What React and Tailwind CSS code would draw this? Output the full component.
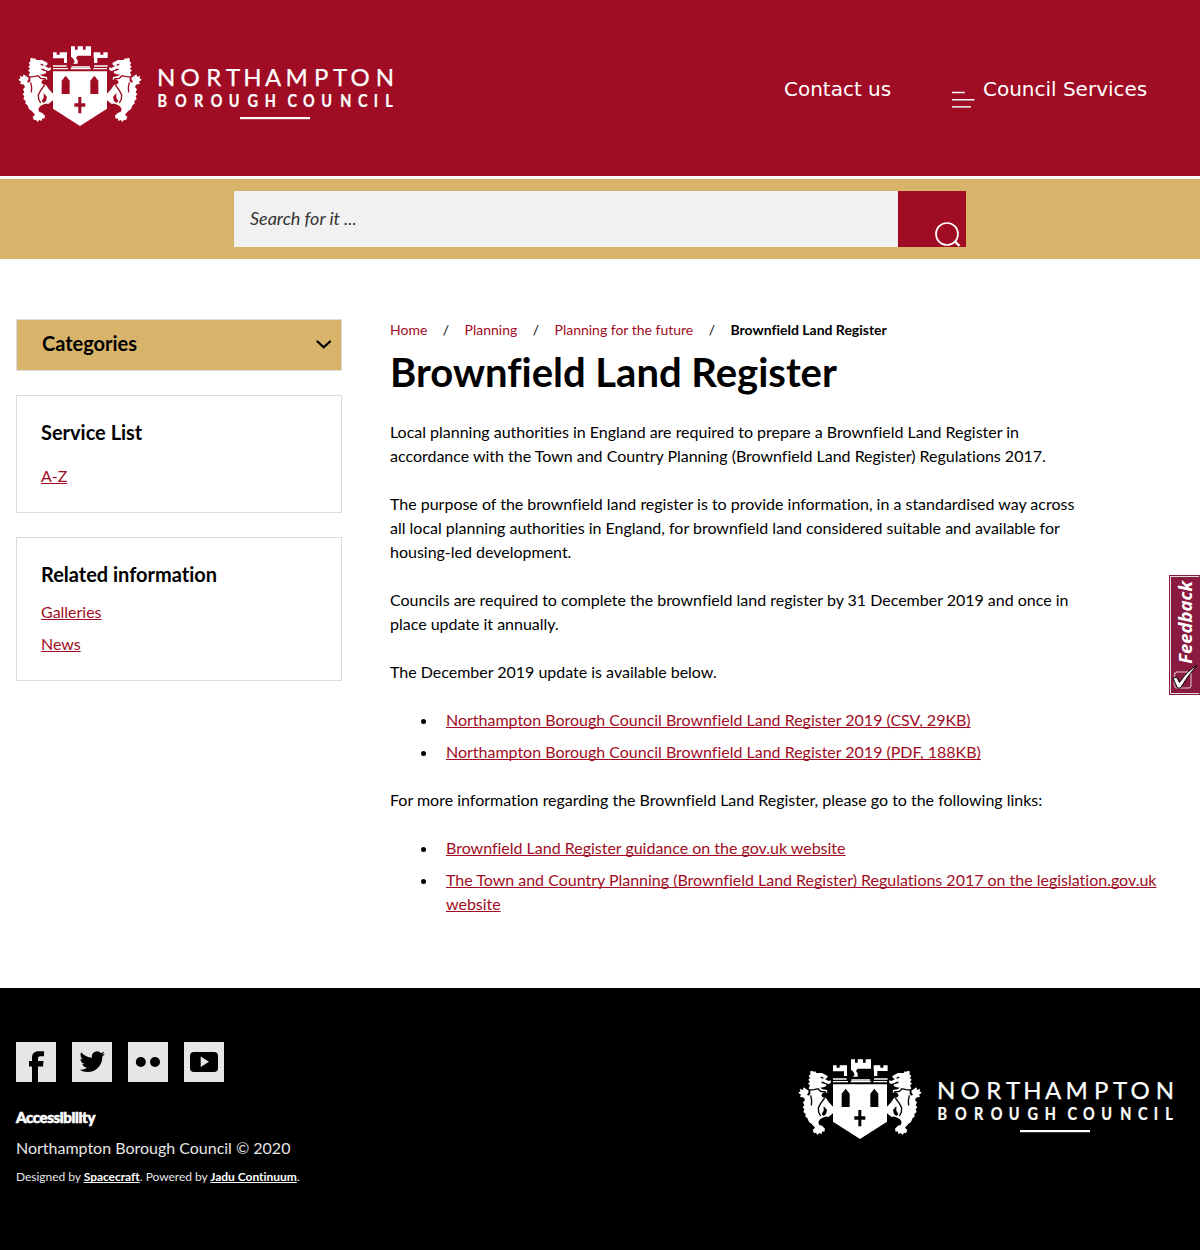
const Lion = () => (
  <g>
    <path
      fill="currentColor"
      d="M61 70 L67 68 L71 72 L75 69 L79 75 L96 75 L106 80 L113 84 L111 91 L104 92 L110 96 L116 99 L122 97 L123 103 L117 108 L108 106 L100 101 L93 101 L96 106 L108 109 L109 114 L100 118 L90 119 L98 124 L111 126 L112 134 L104 133 L98 135 L94 142 L98 148 L108 150 L116 162 L129 176 L129 196 L116 206 L106 206 L98 209 L90 214 L85 222 L88 231 L96 233 L105 242 L103 251 L97 250 L95 258 L88 255 L82 261 L78 254 L72 256 L68 246 L75 239 L66 229 L57 222 L52 210 L46 206 L47 198 L40 192 L43 184 L38 178 L43 172 L39 163 L45 156 L42 149 L30 146 L33 140 L25 134 L31 130 L30 122 L38 126 L41 118 L48 123 L56 128 L55 134 L51 140 L56 143 L61 138 L61 128 L56 121 L60 112 L54 107 L60 101 L55 95 L60 90 L56 83 L61 80 Z"
    />
    <path
      className="fill-none stroke-[var(--bg)]"
      strokeWidth="4"
      d="M57 126 L72 125 L84 122 L92 130 L108 132 M62 142 L65 158 L64 172 M104 150 L92 166 L85 180 L86 192 L92 204 M92 87 L100 91"
    />
    <path className="fill-[var(--bg)]" d="M101 174 L111 186 L108 198 L101 204 L95 198 L101 188 Z" />
  </g>
);

const Logo = () => (
  <svg viewBox="0 0 390 100" className="h-[100px] w-[390px] shrink-0 text-white" role="img" aria-label="Northampton Borough Council">
    <g transform="scale(.33333)">
      <Lion />
      <g transform="translate(420 0) scale(-1 1)">
        <Lion />
      </g>
      <path fill="currentColor" d="M129 109 H291 V221 L210 273 L129 221 Z M129 99 H291 V103 H129 Z" />
      <path className="fill-[var(--bg)]" d="M155 177 V137 L167 122 L179 137 V177 Z M241 177 V137 L253 122 L265 137 V177 Z M205 186 H214 V205 H226 V215 H214 V235 H205 V215 H193 V205 H205 Z M174 88 H182 V105 H174 Z M242 88 H250 V105 H242 Z" />
      <path fill="currentColor" d="M129 91 H170 V95 H129 Z M184 94 H240 V98 H184 Z M252 91 H293 V95 H252 Z" />
      <path fill="currentColor" d="M129 52 H140 V59 H149 V52 H171 V84 H162 V70 H129 Z M183 34 H195 V44 H203 V34 H219 V44 H227 V34 H243 V62 H203 L198 69 L203 76 V86 H189 L194 80 L190 71 L183 65 Z M251 52 H271 V59 H280 V52 H293 V69 H262 V84 H252 V70 L251 66 Z" />
    </g>
    <g fill="currentColor" fontFamily="Lato, sans-serif">
      <text x="147 170.4 196.3 216 233.2 255 275.500 304 323 340.500 365.700" y="51.3" fontSize="24" stroke="currentColor" strokeWidth=".25">NORTHAMPTON</text>
      <g transform="scale(.85 1)" fontSize="17" fontWeight="700" stroke="currentColor" strokeWidth=".25">
        <text x="173.5 194 216.5 236.3 257.3 279.3 299.8" y="71.7">BOROUGH</text>
        <text x="326.5 344.7 366.2 388.5 409.5 428 441.5" y="71.7">COUNCIL</text>
      </g>
      <rect x="230" y="82" width="70" height="2.2" />
    </g>
  </svg>
);

const Link = ({ children }) => (
  <a href="#" className="text-[#9f0c24] underline">{children}</a>
);

const Item = ({ children }) => (
  <li className="flex">
    <span className="mt-[10.500px] mr-5 ml-[0.500px] size-[5.500px] shrink-0 rounded-full bg-black" />
    <span>{children}</span>
  </li>
);

const Social = ({ children }) => (
  <a href="#" className="block size-10 bg-[#e6e6e6] text-black">
    <svg viewBox="0 0 40 40" className="size-10" fill="currentColor">{children}</svg>
  </a>
);

export default function App() {
  return (
    <div className="flex h-[1250px] w-[1200px] flex-col overflow-hidden bg-white font-['Lato',sans-serif] text-base leading-6 tracking-[-0.01px] text-black [font-variant-ligatures:none] [text-decoration-skip-ink:none]">
      <header className="flex h-[176px] shrink-0 items-start bg-[#9f0c24] pt-[35px] pl-[10px] [--bg:#9f0c24]">
        <Logo />
        <nav className="flex pt-[39px] pl-[384px] font-['DejaVu_Sans',sans-serif] text-xl leading-[30px] text-white">
          <a href="#" className="w-[168px] whitespace-nowrap">Contact us</a>
          <a href="#" className="flex whitespace-nowrap">
            <svg width="31" height="36" viewBox="0 0 31 36" className="shrink-0 fill-white">
              <path d="M0 17.700h12.700v1.500H0zM0 25h22.500v1.400H0z" />
              <path d="M0 32h19v1.700H0z" className="fill-[#ddd]" />
            </svg>
            Council Services
          </a>
        </nav>
      </header>

      <div className="mt-[3px] flex h-20 shrink-0 justify-center bg-[#d8b46a] pt-3">
        <div className="flex h-14 w-[732px]">
          <div className="flex-1 bg-[#f1f1f1] pl-4 text-lg leading-[54px] text-[#333] italic">Search for it ...</div>
          <button className="h-14 w-[68px] bg-[#9f0c24]">
            <svg viewBox="0 0 68 56" className="h-14 w-[68px] fill-none stroke-white" strokeWidth="1.7">
              <circle cx="49" cy="43" r="11" />
              <path d="M56.500 50 L61.500 55" strokeWidth="2.400" />
            </svg>
          </button>
        </div>
      </div>

      <div className="flex flex-1 pt-[60px] pl-4">
        <aside className="flex w-[326px] shrink-0 flex-col gap-6">
          <div className="flex h-[52px] items-center justify-between border border-[#dcdcdc] bg-[#d8b46a] pr-[9px] pb-1 pl-[25px]">
            <h2 className="text-xl font-bold">Categories</h2>
            <svg viewBox="0 0 17 10" className="mt-1 h-[10px] w-[17px] fill-none stroke-black" strokeWidth="2.200">
              <path d="M2.500 1.500 8.700 7.200 15 1.500" strokeLinecap="round" />
            </svg>
          </div>
          <section className="h-[118px] border border-[#dcdcdc] px-6 pt-6">
            <h2 className="mb-5 text-xl leading-6 font-bold">Service List</h2>
            <Link>A-Z</Link>
          </section>
          <section className="h-[144px] border border-[#dcdcdc] px-6 pt-6">
            <h2 className="mb-[14px] text-xl leading-6 font-bold">Related information</h2>
            <div className="flex flex-col items-start gap-2">
              <Link>Galleries</Link>
              <Link>News</Link>
            </div>
          </section>
        </aside>

        <main className="ml-12 w-[770px]">
          <nav className="flex text-sm leading-[22px] whitespace-nowrap">
            <a href="#" className="text-[#9f0c24]">Home</a>
            <span className="px-[15.500px]">/</span>
            <a href="#" className="text-[#9f0c24]">Planning</a>
            <span className="px-[15.500px]">/</span>
            <a href="#" className="text-[#9f0c24]">Planning for the future</a>
            <span className="px-[15.500px]">/</span>
            <span className="font-bold">Brownfield Land Register</span>
          </nav>
          <h1 className="mt-[7px] mb-6 text-[40px] leading-[48px] font-bold">Brownfield Land Register</h1>
          <div className="flex flex-col gap-6">
            <p className="w-[700px]">Local planning authorities in England are required to prepare a Brownfield Land Register in<br />accordance with the Town and Country Planning (Brownfield Land Register) Regulations 2017.</p>
            <p className="w-[700px]">The purpose of the brownfield land register is to provide information, in a standardised way across<br />all local planning authorities in England, for brownfield land considered suitable and available for<br />housing-led development.</p>
            <p className="w-[700px]">Councils are required to complete the brownfield land register by 31 December 2019 and once in<br />place update it annually.</p>
            <p>The December 2019 update is available below.</p>
            <ul className="flex flex-col gap-2 pl-[30px]">
              <Item><Link>Northampton Borough Council Brownfield Land Register 2019 (CSV, 29KB)</Link></Item>
              <Item><Link>Northampton Borough Council Brownfield Land Register 2019 (PDF, 188KB)</Link></Item>
            </ul>
            <p>For more information regarding the Brownfield Land Register, please go to the following links:</p>
            <ul className="flex flex-col gap-2 pl-[30px]">
              <Item><Link>Brownfield Land Register guidance on the gov.uk website</Link></Item>
              <Item><Link>The Town and Country Planning (Brownfield Land Register) Regulations 2017 on the legislation.gov.uk<br />website</Link></Item>
            </ul>
          </div>
        </main>
      </div>

      <footer className="flex h-[262px] shrink-0 justify-between bg-black pl-4 text-[#e6e6e6] [--bg:#000]">
        <div className="pt-[54px]">
          <div className="flex gap-4">
            <Social><path d="M16 40V24.500H13V19H16V16C16 11.500 18.500 9.300 22.500 9.300H28V14.300H24.500C22.700 14.300 22 15 22 16.700V19H27.500L27 24.500H22V40Z" /></Social>
            <Social><path transform="translate(7.500 7) scale(1.06)" d="M23.953 4.570a10 10 0 01-2.825.775 4.958 4.958 0 002.163-2.723c-.951.555-2.005.959-3.127 1.184a4.920 4.920 0 00-8.384 4.482C7.690 8.095 4.067 6.130 1.640 3.162a4.822 4.822 0 00-.666 2.475c0 1.710.870 3.213 2.188 4.096a4.904 4.904 0 01-2.228-.616v.060a4.923 4.923 0 003.946 4.827 4.996 4.996 0 01-2.212.085 4.936 4.936 0 004.604 3.417 9.867 9.867 0 01-6.102 2.105c-.390 0-.779-.023-1.170-.067a13.995 13.995 0 007.557 2.209c9.053 0 13.998-7.496 13.998-13.985 0-.210 0-.420-.015-.630A9.935 9.935 0 0024 4.590z" /></Social>
            <Social><circle cx="12.800" cy="20" r="5" /><circle cx="27" cy="20" r="5" /></Social>
            <Social><rect x="6" y="10" width="28" height="20" rx="4" /><path d="M16.700 14.500V25L25 19.800Z" fill="#e6e6e6" /></Social>
          </div>
          <p className="mt-[23px] text-[15px] leading-6 font-black tracking-[-0.35px] text-white [-webkit-text-stroke:0.6px_#fff]"><a href="#">Accessibility</a></p>
          <p className="mt-[7px]">Northampton Borough Council © 2020</p>
          <p className="mt-[5px] text-xs leading-6 tracking-[-0.03px]">Designed by <a href="#" className="font-bold text-white underline">Spacecraft</a>. Powered by <a href="#" className="font-bold text-white underline">Jadu Continuum</a>.</p>
        </div>
        <div className="mr-[20px] pt-[60px]"><Logo /></div>
      </footer>

      <a href="#" aria-label="Feedback" className="fixed top-[575px] right-0 h-[120px] w-[31px] border border-[#8b1a40] bg-[#8b1a40]">
        <span className="absolute inset-0 border border-r-0 border-[#ddd]" />
        <span className="absolute top-[5px] left-[3px] rotate-180 font-['Open_Sans',sans-serif] text-[18.500px] leading-6 font-bold text-white italic [writing-mode:vertical-rl]">Feedback</span>
        <svg viewBox="0 0 30 30" className="absolute bottom-0 left-0 size-[30px]" fill="none">
          <rect x="4.500" y="8" width="16.500" height="16" rx="3" stroke="#c890a5" strokeWidth="1.500" />
          <path d="M3 14.500L6.500 13L9.500 18.500Q17 7 27 1.500Q18 11 10.500 24L7.500 24Z" fill="white" stroke="black" strokeWidth="1" />
        </svg>
      </a>
    </div>
  );
}
